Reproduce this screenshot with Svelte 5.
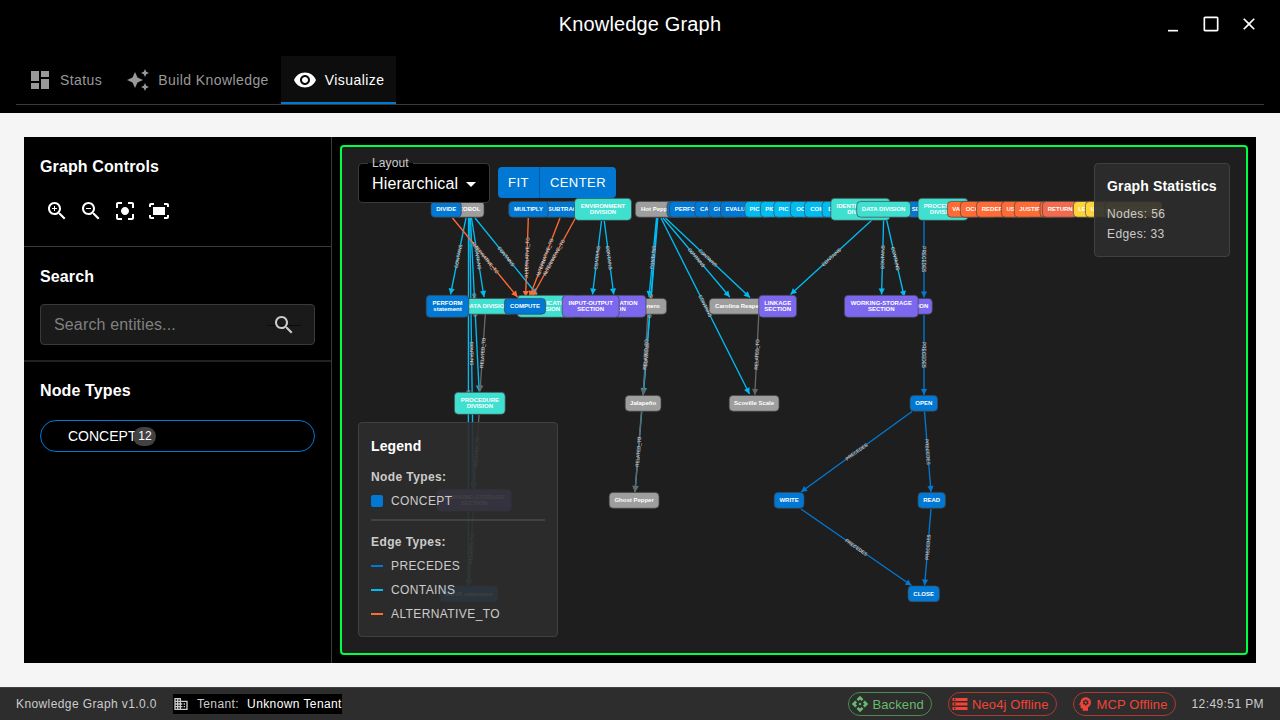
<script>
  const C = { blue: '#0078d4', cyan: '#00bcf2', teal: '#40e0d0', purple: '#7b68ee', grey: '#9e9e9e', orange: '#ff6b35', coral: '#f26b4e', yellow: '#ffd43b', rel: '#666666' };

  // left, right, vertical centre, colour, lines of text
  const nodes = [
    [635.3, 682, 209.3, C.grey, ['Hot Peppers']],
    [455, 484, 209.3, C.grey, ['COBOL']],
    [431, 461.3, 209.3, C.blue, ['DIVIDE']],
    [566, 590, 209.3, C.blue, ['']],
    [542.5, 586, 209.3, C.blue, ['SUBTRACT']],
    [508.7, 548.3, 209.3, C.blue, ['MULTIPLY']],
    [574.5, 631.5, 209.3, C.teal, ['ENVIRONMENT', 'DIVISION']],
    [667, 700, 209.3, C.blue, ['']],
    [669.5, 710, 209.3, C.blue, ['PERFORM']],
    [694.8, 721, 209.3, C.blue, ['CALL']],
    [708.4, 738, 209.3, C.blue, ['GO TO']],
    [720.5, 762, 209.3, C.blue, ['EVALUATE']],
    [744.8, 770, 209.3, C.cyan, ['PIC X']],
    [760.4, 785, 209.3, C.cyan, ['PIC 9']],
    [773.8, 799, 209.3, C.cyan, ['PIC A']],
    [790.4, 828, 209.3, C.cyan, ['OCCURS']],
    [804.4, 834, 209.3, C.cyan, ['COMP']],
    [822, 860, 209.3, C.cyan, ['DISPLAY']],
    [830.8, 890, 209.3, C.teal, ['IDENTIFICATION', 'DIVISION']],
    [907, 942, 209.3, C.blue, ['SEARCH']],
    [856.7, 910.6, 209.3, C.teal, ['DATA DIVISION']],
    [918, 968, 209.3, C.teal, ['PROCEDURE', 'DIVISION']],
    [947.3, 977, 209.3, C.orange, ['VALUE']],
    [960.4, 997, 209.3, C.orange, ['OCCURS']],
    [976.4, 1021.5, 209.3, C.orange, ['REDEFINES']],
    [1001.4, 1033, 209.3, C.orange, ['USAGE']],
    [1014.3, 1055, 209.3, C.orange, ['JUSTIFIED']],
    [1040, 1075, 209.3, C.orange, ['']],
    [1042.4, 1078, 209.3, C.coral, ['RETURN']],
    [1073.4, 1098, 209.3, C.yellow, ['LEFT']],
    [1085.4, 1117, 209.3, C.yellow, ['UPPER']],
    [1104.8, 1162, 209.3, C.yellow, ['NUMERIC-EDIT']],
    [460, 514, 306.3, C.teal, ['DATA DIVISION']],
    [426.2, 468.8, 306.3, C.blue, ['PERFORM', 'statement']],
    [517.2, 576.6, 306.3, C.teal, ['IDENTIFICATION', 'DIVISION']],
    [504.4, 545.6, 306.3, C.blue, ['COMPUTE']],
    [625, 666.6, 306.3, C.grey, ['Habanero']],
    [579, 646, 306.3, C.purple, ['CONFIGURATION', 'SECTION']],
    [562.2, 619.2, 306.3, C.purple, ['INPUT-OUTPUT', 'SECTION']],
    [709.2, 767, 306.3, C.grey, ['Carolina Reaper']],
    [758.7, 796.6, 306.3, C.purple, ['LINKAGE', 'SECTION']],
    [883, 932.3, 306.3, C.purple, ['FILE SECTION']],
    [844.4, 918.2, 306.3, C.purple, ['WORKING-STORAGE', 'SECTION']],
    [454.4, 505.2, 403.3, C.teal, ['PROCEDURE', 'DIVISION']],
    [625.2, 661, 403.3, C.grey, ['Jalapeño']],
    [729.2, 779, 403.3, C.grey, ['Scoville Scale']],
    [910, 937.6, 403.3, C.blue, ['OPEN']],
    [437, 511.2, 500.3, C.purple, ['WORKING-STORAGE', 'SECTION']],
    [609.2, 659, 500.3, C.grey, ['Ghost Pepper']],
    [774.2, 804, 500.3, C.blue, ['WRITE']],
    [918, 945.4, 500.3, C.blue, ['READ']],
    [439.4, 498, 593.8, C.blue, ['MOVE statement']],
    [908, 939.4, 593.8, C.blue, ['CLOSE']]
  ];

  const K = 'CONTAINS', P = 'PRECEDES', A = 'ALTERNATIVE_TO', R = 'RELATED_TO';
  const tint = { [K]: C.cyan, [P]: C.blue, [A]: C.orange, [R]: C.rel };
  const edges = [
    [466, 218, 450.5, 294.5, K], [468.5, 218, 468.3, 585.5, K], [469.7, 218, 473.5, 489, K],
    [470.4, 218, 479.2, 391.5, K], [471.5, 218, 484, 297, K], [475, 218, 537, 294.5, K],
    [452.5, 218, 517.5, 297, A], [528.3, 218, 525.6, 297, A], [560, 218, 529.5, 297, A], [575.5, 218, 532, 297, A],
    [601.5, 221, 592.5, 294.5, K], [604.3, 221, 613.7, 294.5, K],
    [657.8, 218, 635, 492, K], [657, 218, 643.5, 394, K], [656.5, 218, 649, 297, K],
    [661, 218, 749.5, 394, K], [663, 218, 729.8, 297, K], [665.5, 218, 750, 297.5, K],
    [872, 220, 790.5, 294.5, K], [883.6, 220, 881.6, 294.5, K], [886.6, 220, 904.3, 297, K],
    [924, 221, 924, 297.5, P], [924, 315, 924, 395, P],
    [485.3, 314, 480, 391.5, R], [647.8, 314, 643.2, 395, R], [758.8, 314, 754.8, 395, R],
    [479, 415, 474, 489, R], [641.5, 411.5, 635, 492, R], [473, 512, 469.2, 585.5, R],
    [912, 411.5, 801, 492, P], [924.5, 411.5, 931, 492, P], [801, 509, 911.5, 585.5, P], [931, 509, 924.6, 585.5, P]
  ].map(([x1, y1, x2, y2, label]) => {
    let a = Math.atan2(y2 - y1, x2 - x1) * 180 / Math.PI;
    const dir = a;
    if (a > 90) a -= 180;
    return { x1, y1, x2, y2, label, a, dir, c: tint[label], mx: (x1 + x2) / 2, my: (y1 + y2) / 2 };
  });

  const I = {
    dash: 'M3 13h8V3H3v10zm0 8h8v-6H3v6zm10 0h8V11h-8v10zm0-18v6h8V3h-8z',
    magic: 'm19 9 1.25-2.75L23 5l-2.75-1.25L19 1l-1.25 2.75L15 5l2.75 1.25L19 9zm-7.5.5L9 4 6.5 9.5 1 12l5.5 2.5L9 20l2.5-5.5L17 12l-5.5-2.5zM19 15l-1.25 2.75L15 19l2.75 1.25L19 23l1.25-2.75L23 19l-2.75-1.25L19 15z',
    eye: 'M12 4.5C7 4.5 2.73 7.61 1 12c1.73 4.39 6 7.5 11 7.5s9.27-3.11 11-7.5c-1.73-4.39-6-7.5-11-7.5zM12 17c-2.76 0-5-2.24-5-5s2.24-5 5-5 5 2.24 5 5-2.24 5-5 5zm0-8c-1.66 0-3 1.34-3 3s1.34 3 3 3 3-1.34 3-3-1.34-3-3-3z',
    search: 'M15.5 14h-.79l-.28-.27C15.41 12.59 16 11.11 16 9.5 16 5.91 13.09 3 9.5 3S3 5.91 3 9.5 5.91 16 9.5 16c1.61 0 3.09-.59 4.23-1.57l.27.28v.79l5 4.99L20.49 19l-4.99-5zm-6 0C7.01 14 5 11.99 5 9.5S7.01 5 9.5 5 14 7.01 14 9.5 11.99 14 9.5 14z',
    plus: 'M12 10h-2v2H9v-2H7V9h2V7h1v2h2v1z',
    minus: 'M7 9h5v1H7z',
    focus: 'M12 8c-2.21 0-4 1.79-4 4s1.79 4 4 4 4-1.79 4-4-1.79-4-4-4zm-7 7H3v4c0 1.1.9 2 2 2h4v-2H5v-4zM5 5h4V3H5c-1.1 0-2 .9-2 2v4h2V5zm14-2h-4v2h4v4h2V5c0-1.1-.9-2-2-2zm0 16h-4v2h4c1.1 0 2-.9 2-2v-4h-2v4z',
    fit: 'M17 4h3c1.1 0 2 .9 2 2v2h-2V6h-3V4zM4 8V6h3V4H4c-1.1 0-2 .9-2 2v2h2zm16 8v2h-3v2h3c1.1 0 2-.9 2-2v-2h-2zM7 18H4v-2H2v2c0 1.1.9 2 2 2h3v-2zM18 8H6v8h12V8z',
    min: 'M6 19h12v2H6z',
    square: 'M19 3H5c-1.1 0-2 .9-2 2v14c0 1.1.9 2 2 2h14c1.1 0 2-.9 2-2V5c0-1.1-.9-2-2-2zm0 16H5V5h14v14z',
    close: 'M19 6.41 17.59 5 12 10.59 6.41 5 5 6.41 10.59 12 5 17.59 6.41 19 12 13.41 17.59 19 19 17.59 13.41 12z',
    business: 'M12 7V3H2v18h20V7H12zM6 19H4v-2h2v2zm0-4H4v-2h2v2zm0-4H4V9h2v2zm0-4H4V5h2v2zm4 12H8v-2h2v2zm0-4H8v-2h2v2zm0-4H8V9h2v2zm0-4H8V5h2v2zm10 12h-8v-2h2v-2h-2v-2h2v-2h-2V9h8v10zm-2-8h-2v2h2v-2zm0 4h-2v2h2v-2z',
    api: 'M14 12l-2 2-2-2 2-2 2 2zm-2-6l2.12 2.12 2.5-2.5L12 1 7.38 5.62l2.5 2.5L12 6zm-6 6l2.12-2.12-2.5-2.5L1 12l4.62 4.62 2.5-2.5L6 12zm12 0l-2.12 2.12 2.5 2.5L23 12l-4.62-4.62-2.5 2.5L18 12zm-6 6l-2.12-2.12-2.5 2.5L12 23l4.62-4.62-2.5-2.5L12 18z',
    storage: 'M2 20h20v-4H2v4zm2-3h2v2H4v-2zM2 4v4h20V4H2zm4 3H4V5h2v2zm-4 7h20v-4H2v4zm2-3h2v2H4v-2z',
    mind: 'M13 8.57c-.79 0-1.43.64-1.43 1.43s.64 1.43 1.43 1.43 1.43-.64 1.43-1.43-.64-1.43-1.43-1.43zM13 3C9.25 3 6.2 5.94 6.02 9.64L4.1 12.2c-.25.33-.01.8.4.8H6v3c0 1.1.9 2 2 2h1v3h7v-4.68c2.36-1.12 4-3.53 4-6.32 0-3.87-3.13-7-7-7zm3 7c0 .13-.01.26-.02.39l.83.66c.08.06.1.16.05.25l-.8 1.39c-.05.09-.16.12-.24.09l-.99-.4c-.21.16-.43.29-.67.39L14 13.83c-.01.1-.1.17-.2.17h-1.6c-.1 0-.18-.07-.2-.17l-.15-1.06c-.25-.1-.47-.23-.68-.39l-.99.4c-.09.03-.2 0-.25-.09l-.8-1.39c-.05-.08-.03-.19.05-.25l.84-.66c-.01-.13-.02-.26-.02-.39s.02-.27.04-.39l-.85-.66c-.08-.06-.1-.16-.05-.26l.8-1.38c.05-.09.15-.12.24-.09l1 .4c.2-.15.43-.29.67-.39l.15-1.06C12.02 6.07 12.1 6 12.2 6h1.6c.1 0 .18.07.2.17l.15 1.06c.24.1.46.23.67.39l1-.4c.09-.03.2 0 .24.09l.8 1.38c.05.09.03.2-.05.26l-.85.66c.03.12.04.25.04.39z'
  };
</script>

{#snippet icon(d, size)}
  <svg class="icon" width={size} height={size} viewBox="0 0 24 24"><path {d} /></svg>
{/snippet}

<div class="app">
  <header>
    <h1>Knowledge Graph</h1>
    <div class="window-buttons">
      {@render icon(I.min, 20)}{@render icon(I.square, 20)}{@render icon(I.close, 20)}
    </div>
  </header>
  <nav>
    <div class="tab">{@render icon(I.dash, 24)}<span>Status</span></div>
    <div class="tab">{@render icon(I.magic, 24)}<span>Build Knowledge</span></div>
    <div class="tab active">{@render icon(I.eye, 24)}<span>Visualize</span></div>
  </nav>
  <main>
    <aside>
      <section class="controls">
        <h2>Graph Controls</h2>
        <div class="tools">
          {@render icon(I.search + I.plus, 24)}{@render icon(I.search + I.minus, 24)}{@render icon(I.focus, 24)}{@render icon(I.fit, 24)}
        </div>
      </section>
      <section class="search">
        <h2>Search</h2>
        <div class="field"><span>Search entities...</span><div class="find">{@render icon(I.search, 24)}</div></div>
      </section>
      <section class="types">
        <h2>Node Types</h2>
        <div class="chip"><span>CONCEPT</span><b>12</b></div>
      </section>
    </aside>
    <div class="graph">
      <svg class="canvas" width="904" height="506" viewBox="342 147 904 506">
        {#each edges as e}
          <line x1={e.x1} y1={e.y1} x2={e.x2} y2={e.y2} stroke={e.c} stroke-width="1.35" />
          <path d="M0 0L-6 -3.1L-6 3.1Z" fill={e.c} transform="translate({e.x2} {e.y2}) rotate({e.dir})" />
        {/each}
        {#each edges as e}
          <text class="edge" transform="translate({e.mx} {e.my}) rotate({e.a})" y="1.7">{e.label}</text>
        {/each}
        {#each nodes as [l, r, cy, fill, lines]}
          {@const h = lines.length > 1 ? 22 : 15.8}
          <rect x={l} y={cy - h / 2} width={r - l} height={h} rx="4" {fill} />
          {#each lines as t, i}
            <text class="node" x={(l + r) / 2} y={cy + 2.1 + (lines.length > 1 ? i * 6.4 - 3.4 : 0)}>{t}</text>
          {/each}
        {/each}
      </svg>
      <div class="toolbar">
        <div class="select"><label>Layout</label><span>Hierarchical</span><i></i></div>
        <div class="buttons"><button>FIT</button><button>CENTER</button></div>
      </div>
      <div class="panel stats">
        <h3>Graph Statistics</h3>
        <p>Nodes: 56</p>
        <p>Edges: 33</p>
      </div>
      <div class="panel legend">
        <h3>Legend</h3>
        <h4>Node Types:</h4>
        <div class="item"><i class="box"></i>CONCEPT</div>
        <hr />
        <h4>Edge Types:</h4>
        <div class="item"><i class="line blue"></i>PRECEDES</div>
        <div class="item"><i class="line cyan"></i>CONTAINS</div>
        <div class="item"><i class="line orange"></i>ALTERNATIVE_TO</div>
      </div>
    </div>
  </main>
  <footer>
    <span>Knowledge Graph v1.0.0</span>
    <div class="tenant">{@render icon(I.business, 16)}<span>Tenant:</span><em>Unknown Tenant</em></div>
    <div class="services">
      <div class="pill ok">{@render icon(I.api, 18)}Backend</div>
      <div class="pill">{@render icon(I.storage, 18)}Neo4j Offline</div>
      <div class="pill">{@render icon(I.mind, 18)}MCP Offline</div>
      <span>12:49:51 PM</span>
    </div>
  </footer>
</div>

<style>
  :global(body) { margin: 0; overflow: hidden; }
  * { box-sizing: border-box; }
  .app { width: 1280px; height: 720px; display: flex; flex-direction: column; background: #f5f5f5; font-family: "Liberation Sans", Arial, sans-serif; color: #fff; }
  .icon { display: block; fill: currentColor; flex: none; }
  h1, h2, h3, h4, p { margin: 0; }
  header { height: 56px; flex: none; background: #000; display: grid; grid-template-columns: 1fr auto 1fr; padding: 0 21px; }
  h1 { grid-column: 2; font-size: 20px; font-weight: 400; line-height: 48px; letter-spacing: .15px; }
  .window-buttons { display: flex; justify-content: flex-end; gap: 18px; padding-top: 14px; }
  nav { height: 57px; flex: none; background: linear-gradient(#3a3a3a, #3a3a3a) 16px 48px / 1248px 1px no-repeat #000; display: flex; padding: 0 16px 9px; }
  .tab { height: 48px; display: flex; align-items: center; gap: 8px; padding: 0 12px; font-size: 14px; letter-spacing: .42px; color: #999; }
  .tab.active { color: #fff; background: #0d0d0d; border-bottom: 2px solid #0078d4; padding-top: 2px; }
  main { margin: 24px; width: 1232px; height: 526px; flex: none; background: #000; display: flex; }
  aside { width: 308px; border-right: 1px solid #3a3a3a; }
  section { padding: 16px; border-bottom: 1px solid #3a3a3a; }
  .types { border: 0; padding-top: 15px; }
  h2 { font-size: 16px; line-height: 28px; letter-spacing: .12px; font-weight: 700; }
  .controls { height: 110px; }
  .search { height: 115px; border-bottom: 2px solid #222; }
  .tools { display: flex; gap: 10px; padding: 18px 5px 0; }
  .field { margin-top: 13px; height: 41px; border: 1px solid #3a3a3a; border-radius: 4px; background: #1a1a1a; display: flex; align-items: center; justify-content: space-between; padding: 0 13px; color: #808080; font-size: 16px; letter-spacing: .15px; }
  .find { color: #ccc; padding: 0 5px; background: linear-gradient(#0c0c0c, #0c0c0c) 0 12px / 100% 1px no-repeat; }
  .chip { height: 32px; margin-top: 15px; border: 1px solid #0078d4; border-radius: 16px; display: flex; align-items: center; padding-left: 27px; font-size: 14px; }
  .chip b { margin-left: -3px; height: 19px; width: 23px; line-height: 19px; text-align: center; border-radius: 10px; background: #424242; font-weight: 400; font-size: 12px; }
  .graph { position: relative; width: 908px; height: 510px; margin: 8px; border: 2px solid #00ff41; border-radius: 4px; background: #1e1e1e; overflow: hidden; }
  .canvas { display: block; }
  .node { font-size: 6px; font-weight: 700; fill: #fff; text-anchor: middle; }
  rect { stroke: #444; stroke-width: .7; }
  .edge { font-size: 4.7px; fill: #fff; text-anchor: middle; stroke: #1e1e1e; stroke-width: .4px; paint-order: stroke; }
  .toolbar { position: absolute; left: 16px; top: 16px; display: flex; gap: 8px; }
  .select { width: 132px; height: 40px; border: 1px solid #3a3a3a; border-radius: 4px; background: #000; display: flex; align-items: center; padding: 2px 0 0 13px; font-size: 16px; letter-spacing: .15px; position: relative; }
  label { position: absolute; left: 9px; top: -8px; padding: 0 4px; font-size: 12px; line-height: 14px; color: #ccc; background: linear-gradient(#1e1e1e 50%, #000 50%); letter-spacing: .11px; }
  .select i { margin-left: 8px; border: 5px solid transparent; border-top-color: #fff; border-bottom: 0; }
  .buttons { height: 31px; margin-top: 4px; display: flex; border-radius: 4px; overflow: hidden; background: #0078d4; }
  button { border: 0; background: none; color: #fff; font: 13px "Liberation Sans", Arial, sans-serif; letter-spacing: .46px; padding: 0 10px; }
  button:first-child { border-right: 1px solid #005a9e; }
  .panel { position: absolute; background: rgba(45, 45, 45, .91); border: 1px solid #404040; border-radius: 4px; padding: 12px; font-size: 12px; letter-spacing: .4px; color: #ccc; }
  h3 { font-size: 14px; line-height: 22px; letter-spacing: .1px; color: #fff; }
  .stats { right: 16px; top: 16px; width: 136px; height: 94px; padding-top: 11px; }
  .stats h3 { margin-bottom: 7px; letter-spacing: .15px; }
  p { line-height: 20px; }
  .legend { left: 16px; top: 275px; width: 200px; height: 215px; }
  h4 { font-size: 12px; line-height: 20px; }
  .legend h3 { margin-bottom: 10px; }
  .item { display: flex; align-items: center; height: 20px; gap: 8px; }
  h4 + .item, .item + .item { margin-top: 4px; }
  .box { width: 12px; height: 12px; border-radius: 2px; background: #0078d4; }
  .line { width: 12px; height: 2px; }
  .blue { background: #0078d4; } .cyan { background: #00bcf2; } .orange { background: #ff6b35; }
  hr { border: 0; height: 2px; background: #424242; margin: 8px 0 11px; }
  footer { height: 33px; flex: none; background: #2d2d2d; border-top: 1px solid #404040; display: flex; align-items: center; padding: 0 16px; font-size: 12px; letter-spacing: .4px; color: #ccc; }
  .tenant { margin-left: 16px; height: 20px; width: 169px; background: #000; display: flex; align-items: center; white-space: nowrap; }
  .tenant span { margin: 0 8px; }
  .tenant em { font-style: normal; color: #fff; }
  .services { margin-left: auto; display: flex; align-items: center; gap: 16px; }
  .pill { height: 24px; border: 1px solid #b5372f; border-radius: 12px; display: flex; align-items: center; gap: 3px; padding: 0 7px 0 2px; font-size: 13px; letter-spacing: .13px; color: #f44336; }
  .ok { border-color: #4c8c4f; color: #66bb6a; }
</style>
